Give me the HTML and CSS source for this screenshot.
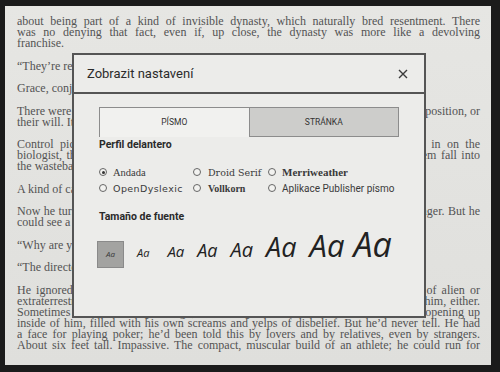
FILE: index.html
```html
<!DOCTYPE html>
<html lang="cs">
<head>
    <meta charset="UTF-8">
    <meta name="viewport" content="width=device-width, initial-scale=1.0">
    <title>Zobrazit nastavení</title>
    <link rel="stylesheet" href="styles.css">
</head>
<body>

<div class="screen">
    <div class="book">
        <p>
            <span class="ln">about being part of a kind of invisible dynasty, which naturally bred resentment. There</span>
            <span class="ln">was no denying that fact, even if, up close, the dynasty was more like a devolving</span>
            <span class="ln end">franchise.</span>
        </p>
        <p><span class="ln end">“They’re ready for you,” she said.</span></p>
        <p><span class="ln end">Grace, conjuring a smile from nowhere.</span></p>
        <p>
            <span class="ln">There were rumors that the transfers had not been voluntary, that some were put in a position, or</span>
            <span class="ln end">their will. It was never clear who did the asking.</span>
        </p>
        <p>
            <span class="ln">Control picked up the file again, flipped past all the photographs, and settled in on the</span>
            <span class="ln">biologist, the one who had walked out past the border and come back, and let them fall into</span>
            <span class="ln end">the wastebasket of his attention.</span>
        </p>
        <p><span class="ln end">A kind of calm settled over him.</span></p>
        <p>
            <span class="ln">Now he turned to the window, where the late afternoon light had gone grey and meager. But he</span>
            <span class="ln end">could see a little of the courtyard.</span>
        </p>
        <p><span class="ln end">“Why are you here?” she asked.</span></p>
        <p><span class="ln end">“The director sent me.”</span></p>
        <p>
            <span class="ln">He ignored the question, and wondered if she really thought he was some kind of alien or</span>
            <span class="ln">extraterrestrial, because he was not, and nobody who knew him would think it of him, either.</span>
            <span class="ln">Sometimes he felt that way, though, as if a trapdoor somewhere in his chest were opening up</span>
            <span class="ln">inside of him, filled with his own screams and yelps of disbelief. But he’d never tell. He had</span>
            <span class="ln">a face for playing poker; he’d been told this by lovers and by relatives, even by strangers.</span>
            <span class="ln">About six feet tall. Impassive. The compact, muscular build of an athlete; he could run for</span>
        </p>
    </div>

    <div class="dialog">
        <div class="dialog-head">
            <h1>Zobrazit nastavení</h1>
            <svg class="close" width="10" height="10" viewBox="0 0 10 10">
                <path d="M1 1 L9 9 M9 1 L1 9" stroke="#3a3a3a" stroke-width="1.4" fill="none"/>
            </svg>
        </div>
        <div class="dialog-body">
            <ul class="tabs">
                <li class="tab is-selected">PÍSMO</li>
                <li class="tab">STRÁNKA</li>
            </ul>

            <h2>Perfil delantero</h2>
            <div class="fonts">
                <label class="opt"><span class="radio checked"></span><span class="f-andada">Andada</span></label>
                <label class="opt"><span class="radio"></span><span class="f-droid">Droid Serif</span></label>
                <label class="opt"><span class="radio"></span><span class="f-merri">Merriweather</span></label>
                <label class="opt"><span class="radio"></span><span class="f-dys">OpenDyslexic</span></label>
                <label class="opt"><span class="radio"></span><span class="f-voll">Vollkorn</span></label>
                <label class="opt"><span class="radio"></span><span class="f-pub">Aplikace Publisher písmo</span></label>
            </div>

            <h2 class="size-title">Tamaño de fuente</h2>
            <div class="sizes">
                <span class="size current">Aa</span>
                <span class="size s1">Aa</span>
                <span class="size s2">Aa</span>
                <span class="size s3">Aa</span>
                <span class="size s4">Aa</span>
                <span class="size s5">Aa</span>
                <span class="size s6">Aa</span>
                <span class="size s7">Aa</span>
            </div>
        </div>
    </div>
</div>

</body>
</html>
```

FILE: styles.css
```css
* {
    margin: 0;
    padding: 0;
    box-sizing: border-box;
}
ul {
    list-style: none;
}
body {
    background: #1b1b1b;
    width: 500px;
    height: 372px;
    overflow: hidden;
}

.screen {
    position: relative;
    margin: 6px 9px 7px 5px;
    height: 359px;
    background: linear-gradient(to bottom, #e6e6e3, #dfdfdc);
    overflow: hidden;
}

/* page text behind the dialog */
.book {
    padding: 10px 11px 0 12px;
    font-family: "Liberation Serif", serif;
    font-size: 12px;
    line-height: 11px;
    color: #535353;
}
.book p {
    margin-bottom: 11.5px;
}
.book .ln {
    display: block;
    white-space: nowrap;
    text-align: justify;
    text-align-last: justify;
}
.book .ln.end {
    text-align-last: left;
}

/* settings dialog */
.dialog {
    position: absolute;
    left: 67px;
    top: 47px;
    width: 354px;
    height: 265px;
    background: #ececea;
    border: 2px solid #555;
    font-family: Roboto, "Noto Sans", sans-serif;
    color: #2e2e2e;
}
.dialog-head {
    display: flex;
    align-items: center;
    justify-content: space-between;
    height: 39px;
    padding: 0 16px 0 13px;
    border-bottom: 2px solid #555;
}
.dialog-head h1 {
    font-size: 13px;
    font-weight: 400;
    color: #2b2b2b;
}
.close {
    display: block;
}

.dialog-body {
    padding: 13px 25px 0;
}

.tabs {
    display: flex;
    height: 30px;
}
.tab {
    flex: 1;
    display: flex;
    align-items: center;
    justify-content: center;
    padding-bottom: 1px;
    font-size: 8.5px;
    color: #333;
    background: #cdcdcb;
    border: 1px solid #8c8c8c;
}
.tab.is-selected {
    background: #f1f1ef;
    border-right: 0;
    border-bottom: 0;
}

.dialog-body h2 {
    margin-top: 1px;
    font-size: 10.5px;
    line-height: 14px;
    font-weight: 700;
    color: #2a2a2a;
}

.fonts {
    display: grid;
    grid-template-columns: 94px 75px 1fr;
    grid-auto-rows: 16px;
    margin-top: 12px;
}
.opt {
    display: flex;
    align-items: center;
    gap: 6px;
    white-space: nowrap;
    color: #3a3a3a;
}
.opt:nth-child(3n+2) {
    gap: 7px;
}
.radio {
    width: 8px;
    height: 8px;
    border: 1px solid #666;
    border-radius: 50%;
    flex-shrink: 0;
    position: relative;
    background: #f2f2f0;
}
.radio.checked::after {
    content: "";
    position: absolute;
    left: 1.5px;
    top: 1.5px;
    width: 3px;
    height: 3px;
    border-radius: 50%;
    background: #333;
}
.f-andada {
    font-family: "Liberation Serif", serif;
    font-size: 10.5px;
}
.f-droid {
    font-family: "DejaVu Serif", serif;
    font-size: 9.5px;
}
.f-merri {
    font-family: "Liberation Serif", serif;
    font-size: 11px;
    font-weight: 700;
}
.f-dys {
    font-family: "DejaVu Sans", sans-serif;
    font-size: 9.5px;
    letter-spacing: 0.4px;
}
.f-voll {
    font-family: "Liberation Serif", serif;
    font-size: 10px;
    font-weight: 700;
}
.f-pub {
    font-family: Roboto, sans-serif;
    font-size: 10px;
}

.dialog-body h2.size-title {
    margin-top: 14px;
}

.sizes {
    display: flex;
    align-items: baseline;
    gap: 13px;
    margin-top: 3px;
    margin-left: -2px;
    line-height: 1;
    font-family: "Open Sans", "Noto Sans", sans-serif;
    font-style: italic;
    color: #222;
}
.size.current {
    display: inline-flex;
    align-items: center;
    justify-content: center;
    width: 27px;
    height: 27px;
    background: #a3a3a1;
    border: 1px solid #8a8a8a;
    font-size: 8px;
    color: #3a3a3a;
}
.s1 { font-size: 11px; }
.s2 { font-size: 15px; margin-left: 5px; }
.s3 { font-size: 18px; }
.s4 { font-size: 20px; }
.s5 { font-size: 27px; }
.s6 { font-size: 31px; }
.s7 { font-size: 34px; margin-left: -4px; }
```
